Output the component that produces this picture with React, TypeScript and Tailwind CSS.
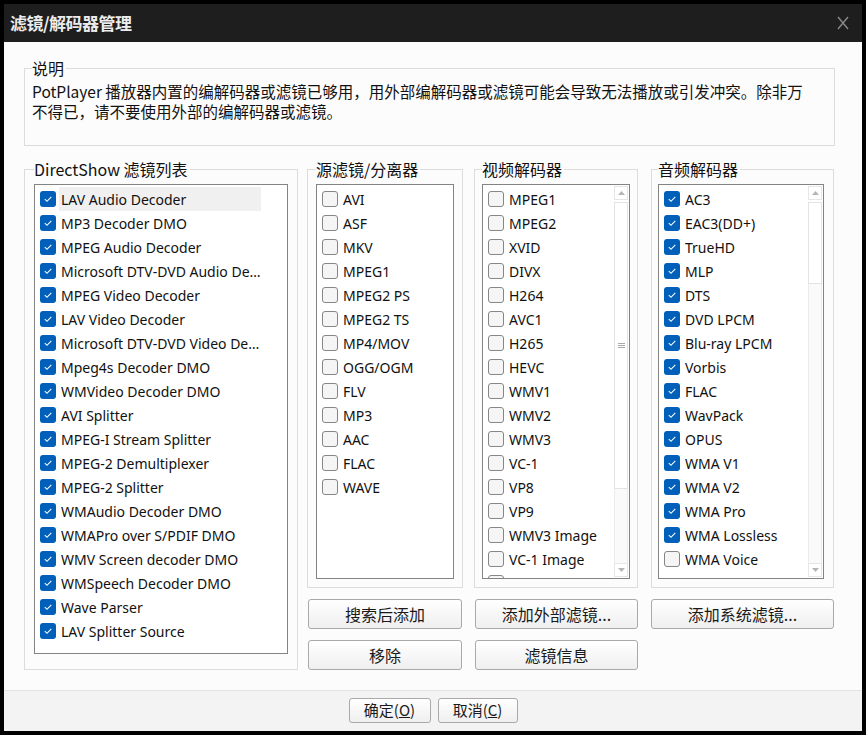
import React from 'react';

// Filter / decoder manager dialog (PotPlayer style)
const CJK = "font-['Noto_Sans_CJK_SC',sans-serif]";
const LATIN = "font-['Noto_Sans','Noto_Sans_CJK_SC',sans-serif]";

const directShowFilters = [
  'LAV Audio Decoder',
  'MP3 Decoder DMO',
  'MPEG Audio Decoder',
  'Microsoft DTV-DVD Audio Decoder',
  'MPEG Video Decoder',
  'LAV Video Decoder',
  'Microsoft DTV-DVD Video Decoder',
  'Mpeg4s Decoder DMO',
  'WMVideo Decoder DMO',
  'AVI Splitter',
  'MPEG-I Stream Splitter',
  'MPEG-2 Demultiplexer',
  'MPEG-2 Splitter',
  'WMAudio Decoder DMO',
  'WMAPro over S/PDIF DMO',
  'WMV Screen decoder DMO',
  'WMSpeech Decoder DMO',
  'Wave Parser',
  'LAV Splitter Source',
];

const sourceFilters = ['AVI', 'ASF', 'MKV', 'MPEG1', 'MPEG2 PS', 'MPEG2 TS', 'MP4/MOV', 'OGG/OGM', 'FLV', 'MP3', 'AAC', 'FLAC', 'WAVE'];

const videoDecoders = [
  'MPEG1', 'MPEG2', 'XVID', 'DIVX', 'H264', 'AVC1', 'H265', 'HEVC', 'WMV1', 'WMV2', 'WMV3',
  'VC-1', 'VP8', 'VP9', 'WMV3 Image', 'VC-1 Image', 'MPEG4',
];

const audioDecoders: [string, boolean][] = [
  ['AC3', true],
  ['EAC3(DD+)', true],
  ['TrueHD', true],
  ['MLP', true],
  ['DTS', true],
  ['DVD LPCM', true],
  ['Blu-ray LPCM', true],
  ['Vorbis', true],
  ['FLAC', true],
  ['WavPack', true],
  ['OPUS', true],
  ['WMA V1', true],
  ['WMA V2', true],
  ['WMA Pro', true],
  ['WMA Lossless', true],
  ['WMA Voice', false],
];

function CheckBox({ checked }: { checked: boolean }) {
  if (checked) {
    return (
      <span className="w-4 h-4 shrink-0 rounded-[3px] bg-[#005fb8] flex items-center justify-center">
        <svg width="10" height="8" viewBox="0 0 10 8">
          <path d="M1.8 4.2 L4 6.3 L8.3 1.9" stroke="white" strokeWidth="1.1" fill="none" />
        </svg>
      </span>
    );
  }
  return <span className="w-4 h-4 shrink-0 rounded-[3px] border border-[#868686] bg-[#f5f5f5]" />;
}

function Row({
  label,
  checked,
  highlight = false,
  wide = false,
}: {
  label: string;
  checked: boolean;
  highlight?: boolean;
  wide?: boolean;
}) {
  return (
    <div className="h-6 flex items-center pl-[5px] shrink-0">
      <CheckBox checked={checked} />
      <span
        className={`ml-[3px] pl-[2px] h-6 leading-[25px] text-[14px] text-[#111] whitespace-nowrap ${LATIN} ${
          wide ? 'w-[202px] overflow-hidden text-ellipsis' : ''
        } ${highlight ? 'bg-[#f0f0f0]' : ''}`}
      >
        {label}
      </span>
    </div>
  );
}

function Arrow({ down = false }: { down?: boolean }) {
  return (
    <div className="h-[14px] border border-[#e6e6e6] bg-white flex items-center justify-center shrink-0">
      <svg width="7" height="4" viewBox="0 0 7 4">
        <path d={down ? 'M0 0 H7 L3.5 4 Z' : 'M0 4 H7 L3.5 0 Z'} fill="#b5b5b5" />
      </svg>
    </div>
  );
}

function ScrollBar({ thumbHeight, grip = false }: { thumbHeight: number; grip?: boolean }) {
  return (
    <div className="w-[14px] mr-[1px] py-[1px] flex flex-col shrink-0">
      <Arrow />
      <div
        className="mt-[2px] border border-[#e3e3e3] bg-white flex flex-col items-center justify-center gap-[1px] shrink-0"
        style={{ height: thumbHeight }}
      >
        {grip && (
          <>
            <span className="w-[7px] h-px bg-[#a8a8a8]" />
            <span className="w-[7px] h-px bg-[#a8a8a8]" />
            <span className="w-[7px] h-px bg-[#a8a8a8]" />
          </>
        )}
      </div>
      <div className="flex-1 border-x border-[#ececec] bg-[#fafafa]" />
      <Arrow down />
    </div>
  );
}

function Group({
  title,
  className,
  children,
}: {
  title: string;
  className: string;
  children: React.ReactNode;
}) {
  return (
    <fieldset className={`border border-[#dcdcdc] ${className}`}>
      <legend className={`pr-[2px] leading-[20px] text-[16px] text-[#111] ${CJK}`}>{title}</legend>
      {children}
    </fieldset>
  );
}

function Button({ children, className }: { children: React.ReactNode; className: string }) {
  return (
    <button
      type="button"
      className={`border border-[#a9a9a9] rounded-[3px] bg-linear-to-b from-white to-[#efefef] text-[#1a1a1a] flex items-center justify-center ${CJK} ${className}`}
    >
      {children}
    </button>
  );
}

export default function App() {
  return (
    <div className="w-[866px] h-[735px] bg-black p-[4px] flex flex-col">
      <div className="h-[38px] bg-[#1e1e1e] flex items-center justify-between pl-[6px] pr-[13px] shrink-0">
        <span className={`text-[17px] font-bold text-[#ececec] tracking-[-0.5px] ${CJK}`}>滤镜/解码器管理</span>
        <svg width="12" height="14" viewBox="0 0 12 14">
          <path d="M1 1 L11 13 M11 1 L1 13" stroke="#8a8a8a" strokeWidth="1.4" />
        </svg>
      </div>

      <div className="h-[648px] bg-[#fcfcfc] px-[20px] pt-[16px] shrink-0">
        <fieldset className="w-[811px] border border-[#dcdcdc] px-[7px] pt-[3px] pb-[24px]">
          <legend className={`pr-[2px] leading-[20px] text-[16px] text-[#111] ${CJK}`}>说明</legend>
          <p className={`text-[15.5px] leading-[20px] text-[#111] whitespace-nowrap ${CJK}`}>
            PotPlayer 播放器内置的编解码器或滤镜已够用，用外部编解码器或滤镜可能会导致无法播放或引发冲突。除非万
            <br />
            不得已，请不要使用外部的编解码器或滤镜。
          </p>
        </fieldset>

        <div className="flex mt-[13px]">
          <Group title="DirectShow 滤镜列表" className="w-[274px] px-[9px] pt-[5px] pb-[12px] shrink-0">
            <div className="h-[470px] border border-[#838383] bg-white pt-[2px] overflow-hidden">
              {directShowFilters.map((f, i) => (
                <Row key={f} label={f} checked highlight={i === 0} wide />
              ))}
            </div>
          </Group>

          <div className="ml-[9px] w-[156px] flex flex-col shrink-0">
            <Group title="源滤镜/分离器" className="px-[8px] pt-[5px] pb-[8px]">
              <div className="h-[395px] border border-[#838383] bg-white pt-[2px] overflow-hidden">
                {sourceFilters.map((f) => (
                  <Row key={f} label={f} checked={false} />
                ))}
              </div>
            </Group>
            <Button className="ml-[1px] mt-[11px] w-[154px] h-[30px] text-[16px]">搜索后添加</Button>
            <Button className="ml-[1px] mt-[11px] w-[154px] h-[30px] text-[16px]">移除</Button>
          </div>

          <div className="ml-[11px] w-[164px] flex flex-col shrink-0">
            <Group title="视频解码器" className="px-[7px] pt-[5px] pb-[8px]">
              <div className="h-[395px] border border-[#838383] bg-white flex overflow-hidden">
                <div className="flex-1 pt-[2px] flex flex-col overflow-hidden">
                  {videoDecoders.map((f) => (
                    <Row key={f} label={f} checked={false} />
                  ))}
                </div>
                <ScrollBar thumbHeight={287} grip />
              </div>
            </Group>
            <Button className="ml-[1px] mt-[11px] w-[163px] h-[30px] text-[16px]">添加外部滤镜...</Button>
            <Button className="ml-[1px] mt-[11px] w-[163px] h-[30px] text-[16px]">滤镜信息</Button>
          </div>

          <div className="ml-[13px] w-[183px] flex flex-col shrink-0">
            <Group title="音频解码器" className="pl-[6px] pr-[9px] pt-[5px] pb-[8px]">
              <div className="h-[395px] border border-[#838383] bg-white flex overflow-hidden">
                <div className="flex-1 pt-[2px] flex flex-col overflow-hidden">
                  {audioDecoders.map(([f, c]) => (
                    <Row key={f} label={f} checked={c} />
                  ))}
                </div>
                <ScrollBar thumbHeight={82} />
              </div>
            </Group>
            <Button className="mt-[11px] w-[183px] h-[30px] text-[16px]">添加系统滤镜...</Button>
          </div>
        </div>
      </div>

      <div className="h-[41px] border-t border-[#e3e3e3] bg-[#f3f3f3] pt-[7px] flex justify-center gap-[7px] shrink-0">
        <Button className="w-[82px] h-[25px] text-[15px]">
          确定(<span className="underline">O</span>)
        </Button>
        <Button className="w-[80px] h-[25px] text-[15px]">
          取消(<span className="underline">C</span>)
        </Button>
      </div>
    </div>
  );
}
